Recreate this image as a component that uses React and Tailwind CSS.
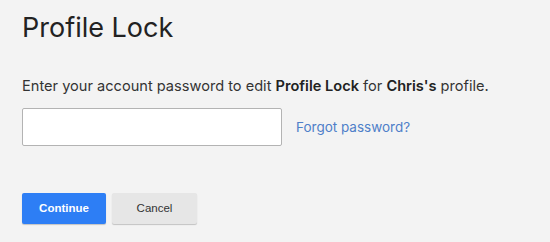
const App = () => {
  return (
    <div className="w-[550px] h-[242px] bg-[#f3f3f3] overflow-hidden px-[22px] pt-[9px]" style={{ fontFamily: 'Inter, "Noto Sans", sans-serif' }}>
      <h1 className="text-[27px] leading-[38px] text-[#222] font-normal">Profile Lock</h1>
      <p className="mt-[30px] text-[14.6px] leading-[18px] text-[#333]">
        Enter your account password to edit <span className="font-semibold text-[#222]">Profile Lock</span> for{' '}
        <span className="font-semibold text-[#222]">Chris's</span> profile.
      </p>
      <div className="mt-[13px] flex items-center">
        <input
          type="password"
          className="w-[260px] h-[38px] bg-white border border-[#b3b3b3] rounded-[2px] outline-none"
        />
        <a href="#" className="ml-[14px] text-[13.5px] text-[#4f7fc9]">Forgot password?</a>
      </div>
      <div className="mt-[47px] flex gap-[6px]" style={{ fontFamily: '"Liberation Sans", Arial, sans-serif' }}>
        <button className="w-[84px] h-[31px] bg-[#2d7ef5] text-white text-[11.5px] font-bold rounded-[2px] shadow-[0_1px_1px_rgba(0,0,0,0.2)]">
          Continue
        </button>
        <button className="w-[85px] h-[31px] bg-[#e6e6e6] text-[#333] text-[11.5px] rounded-[2px] shadow-[0_1px_1px_rgba(0,0,0,0.2)]">
          Cancel
        </button>
      </div>
    </div>
  );
};

export default App;
